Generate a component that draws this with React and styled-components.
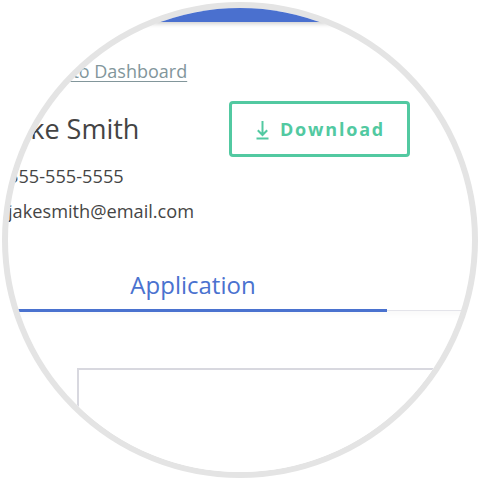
import React from "react";
import styled, { createGlobalStyle } from "styled-components";

const GlobalStyle = createGlobalStyle`
  html, body {
    margin: 0;
    padding: 0;
    background: #ffffff;
  }
  body {
    font-family: "Open Sans", "Noto Sans", sans-serif;
    color: #454545;
  }
  * {
    box-sizing: border-box;
  }
`;

const Lens = styled.div`
  width: 476px;
  height: 476px;
  margin: 2px;
  border: 6px solid #e4e4e4;
  border-radius: 50%;
  overflow: hidden;
  background: #ffffff;
`;

const Page = styled.div`
  width: 776px;
  margin: -8px 0 0 -8px;
`;

const TopBar = styled.div`
  height: 22px;
  background: #4a70cf;
  box-shadow: 0 2px 4px rgba(0, 0, 0, 0.18);
`;

const Content = styled.div`
  padding-top: 37px;
`;

const Profile = styled.div`
  padding-left: 8px;
`;

const BackLink = styled.a`
  display: block;
  width: max-content;
  margin-left: 20px;
  font-size: 18px;
  line-height: 24px;
  color: #82969b;
  text-decoration: underline;
  text-underline-offset: 3px;
  cursor: pointer;
`;

const HeaderRow = styled.div`
  width: 402px;
  margin-top: 18px;
  display: flex;
  align-items: center;
  justify-content: space-between;
`;

const Name = styled.h1`
  margin: 0;
  font-size: 27px;
  font-weight: 500;
  line-height: 36px;
  color: #444444;
`;

const DownloadButton = styled.button`
  width: 181px;
  height: 56px;
  display: flex;
  align-items: center;
  justify-content: center;
  gap: 11px;
  background: #ffffff;
  border: 3px solid #52c9a1;
  border-radius: 4px;
  color: #52c9a1;
  font-family: "Open Sans", sans-serif;
  font-size: 18px;
  font-weight: 700;
  letter-spacing: 1.8px;
  cursor: pointer;
  padding: 0 0 0 2px;
`;

const ContactLine = styled.div`
  font-size: 18.2px;
  line-height: 35px;
  color: #454545;
  margin-top: ${(p) => p.$gap || 0}px;
`;

const TabBar = styled.div`
  margin-top: 40px;
  display: flex;
  border-bottom: 1px solid #e4e4ea;
  box-shadow: 0 4px 6px rgba(0, 0, 0, 0.025);
`;

const Tab = styled.div`
  width: 388px;
  margin-left: -1px;
  margin-bottom: -2px;
  padding: 0 0 8px;
  text-align: center;
  font-size: 24px;
  line-height: 32px;
  color: ${(p) => (p.$active ? "#4a72cf" : "#9aa0a8")};
  border-bottom: 3px solid ${(p) => (p.$active ? "#4a72cf" : "transparent")};
`;

const Panel = styled.div`
  padding: 57px 0 0 77px;
`;

const DocumentBox = styled.div`
  width: 640px;
  height: 300px;
  border: 2px solid #d8d8df;
  background: #ffffff;
`;

const DownloadIcon = () => (
  <svg width="13" height="21" viewBox="0 0 13 21" fill="none">
    <path
      d="M6.5 2V16M1.8 11.3L6.5 16L11.2 11.3M0.5 19.5H12.5"
      stroke="currentColor"
      strokeWidth="2"
    />
  </svg>
);

export default function App() {
  return (
    <>
      <GlobalStyle />
      <Lens>
        <Page>
          <TopBar />
          <Content>
            <Profile>
              <BackLink>Back to Dashboard</BackLink>
              <HeaderRow>
                <Name>Jake Smith</Name>
                <DownloadButton>
                  <DownloadIcon />
                  Download
                </DownloadButton>
              </HeaderRow>
              <ContactLine $gap={2}>555-555-5555</ContactLine>
              <ContactLine>jakesmith@email.com</ContactLine>
            </Profile>
            <TabBar>
              <Tab $active>Application</Tab>
            </TabBar>
            <Panel>
              <DocumentBox />
            </Panel>
          </Content>
        </Page>
      </Lens>
    </>
  );
}
